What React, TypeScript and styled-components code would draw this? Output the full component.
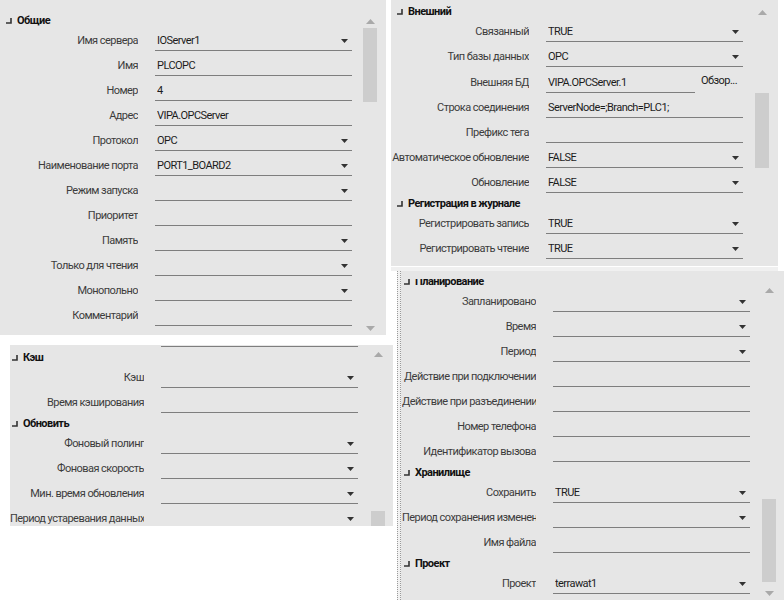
import React from 'react';
import styled, { createGlobalStyle } from 'styled-components';

const Global = createGlobalStyle`
  html, body { margin: 0; padding: 0; background: #ffffff; }
  body { font-family: Roboto, "Noto Sans", "Liberation Sans", sans-serif; font-size: 11px; letter-spacing: -0.55px; }
`;

const Page = styled.div`
  width: 784px;
  height: 600px;
  overflow: hidden;
  display: grid;
  grid-template-columns: 391px 393px;
  align-items: start;
`;

const Column = styled.div`
  display: flex;
  flex-direction: column;
`;

const Panel = styled.div<{ $w: number; $h: number; $ml?: number; $mt?: number }>`
  flex: none;
  width: ${(p) => p.$w}px;
  height: ${(p) => p.$h}px;
  margin-left: ${(p) => p.$ml ?? 0}px;
  margin-top: ${(p) => p.$mt ?? 0}px;
  background: #e6e6e6;
  display: flex;
  overflow: hidden;
`;

const Strip = styled.div`
  height: 4px;
  margin-top: 1px;
  width: 387px;
  background: #f0f0f0;
`;

const Splitter = styled.div`
  flex: none;
  width: 2px;
  margin-right: 1px;
  border-left: 1px dotted #9a9a9a;
  border-right: 1px dotted #9a9a9a;
  background: #f2f2f2;
`;

const Viewport = styled.div<{ $top?: number }>`
  flex: none;
  margin-top: ${(p) => p.$top ?? 0}px;
  overflow: hidden;
`;

const List = styled.div<{ $offset: number }>`
  margin-top: ${(p) => p.$offset}px;
  display: flex;
  flex-direction: column;
`;

const Header = styled.div<{ $indent: number }>`
  height: 16px;
  box-sizing: border-box;
  padding-top: 6px;
  padding-left: ${(p) => p.$indent}px;
  line-height: 10px;
  display: flex;
  align-items: baseline;
  gap: 5px;
  font-weight: 700;
  color: #111111;
  white-space: nowrap;
`;

const Row = styled.div<{ $lw: number; $h?: number }>`
  display: grid;
  grid-template-columns: ${(p) => p.$lw}px 197px;
  column-gap: 17px;
  height: ${(p) => p.$h ?? 25}px;
  align-items: end;
`;

const Label = styled.div`
  text-align: right;
  white-space: nowrap;
  overflow: hidden;
  color: #3c3c3c;
  line-height: 14px;
  padding-bottom: 3px;
`;

const FieldGroup = styled.div`
  display: flex;
  align-items: flex-end;
  min-width: 0;
`;

const Field = styled.div<{ $w?: number }>`
  box-sizing: border-box;
  ${(p) => (p.$w ? `flex: 0 0 ${p.$w}px;` : 'flex: 1;')}
  display: flex;
  align-items: center;
  border-bottom: 1px solid #7e7e7e;
  padding: 0 4px 2px 2px;
  line-height: 14px;
  min-height: 17px;
  color: #1c1c1c;
  white-space: nowrap;
`;

const Value = styled.span`
  flex: 1;
  overflow: hidden;
`;

const Browse = styled.span`
  margin-left: 6px;
  padding-bottom: 5px;
  line-height: 14px;
  color: #1c1c1c;
  white-space: nowrap;
`;

const ScrollBar = styled.div<{ $pt: number; $gap?: number }>`
  flex: none;
  width: 14px;
  margin-left: ${(p) => p.$gap ?? 11}px;
  padding-top: ${(p) => p.$pt}px;
  display: flex;
  flex-direction: column;
`;

const ArrowBox = styled.div`
  flex: none;
  height: 14px;
  display: flex;
  align-items: center;
  justify-content: center;
`;

const Track = styled.div`
  flex: 1;
  display: flex;
  flex-direction: column;
`;

const Thumb = styled.div<{ $top: number; $h: number }>`
  flex: none;
  margin-top: ${(p) => p.$top}px;
  height: ${(p) => p.$h}px;
  background: #cdcdcd;
`;

const Collapse = () => (
  <svg width="6" height="6" viewBox="0 0 6 6">
    <path d="M0 5 H5 V0" stroke="#333" strokeWidth="1.6" fill="none" />
  </svg>
);

const Caret = () => (
  <svg width="7" height="4" viewBox="0 0 7 4">
    <polygon points="0,0 7,0 3.5,4" fill="#333" />
  </svg>
);

const ScrollArrow = ({ up }: { up: boolean }) => (
  <svg width="9" height="5" viewBox="0 0 9 5">
    <polygon points={up ? '0,5 9,5 4.5,0' : '0,0 9,0 4.5,5'} fill="#a9a9a9" />
  </svg>
);

type RowItem = { kind: 'r'; label: string; value?: string; dd?: boolean; browse?: boolean; h?: number };
type Item = { kind: 'h'; text: string } | RowItem;

const H = (text: string): Item => ({ kind: 'h', text });
const R = (label: string, value = '', dd = false, extra: Partial<RowItem> = {}): Item => ({
  kind: 'r',
  label,
  value,
  dd,
  ...extra,
});

const Section = ({ items, lw }: { items: Item[]; lw: number }) => (
  <>
    {items.map((it, i) =>
      it.kind === 'h' ? (
        <Header key={i} $indent={lw - 132}>
          <Collapse />
          <span>{it.text}</span>
        </Header>
      ) : (
        <Row key={i} $lw={lw} $h={it.h}>
          <Label>{it.label}</Label>
          {it.browse ? (
            <FieldGroup>
              <Field $w={149}>
                <Value>{it.value}</Value>
              </Field>
              <Browse>Обзор...</Browse>
            </FieldGroup>
          ) : (
            <Field>
              <Value>{it.value}</Value>
              {it.dd && <Caret />}
            </Field>
          )}
        </Row>
      )
    )}
  </>
);

type SB = { pt: number; top: number; h: number; down?: boolean; gap?: number };

const Scroll = ({ pt, top, h, down, gap }: SB) => (
  <ScrollBar $pt={pt} $gap={gap}>
    <ArrowBox>
      <ScrollArrow up />
    </ArrowBox>
    <Track>
      <Thumb $top={top} $h={h} />
    </Track>
    {down && (
      <ArrowBox>
        <ScrollArrow up={false} />
      </ArrowBox>
    )}
  </ScrollBar>
);

const general: Item[] = [
  H('Общие'),
  R('Имя сервера', 'IOServer1', true),
  R('Имя', 'PLCOPC'),
  R('Номер', '4'),
  R('Адрес', 'VIPA.OPCServer'),
  R('Протокол', 'OPC', true),
  R('Наименование порта', 'PORT1_BOARD2', true),
  R('Режим запуска', '', true),
  R('Приоритет'),
  R('Память', '', true),
  R('Только для чтения', '', true),
  R('Монопольно', '', true),
  R('Комментарий'),
];

const external: Item[] = [
  H('Внешний'),
  R('Связанный', 'TRUE', true),
  R('Тип базы данных', 'OPC', true),
  R('Внешняя БД', 'VIPA.OPCServer.1', false, { browse: true, h: 26 }),
  R('Строка соединения', 'ServerNode=;Branch=PLC1;'),
  R('Префикс тега'),
  R('Автоматическое обновление', 'FALSE', true),
  R('Обновление', 'FALSE', true),
  H('Регистрация в журнале'),
  R('Регистрировать запись', 'TRUE', true),
  R('Регистрировать чтение', 'TRUE', true),
];

const cache: Item[] = [
  R(''),
  H('Кэш'),
  R('Кэш', '', true),
  R('Время кэширования'),
  H('Обновить'),
  R('Фоновый полинг', '', true),
  R('Фоновая скорость', '', true),
  R('Мин. время обновления', '', true),
  R('Период устаревания данных', '', true),
];

const planning: Item[] = [
  H('Планирование'),
  R('Запланировано', '', true),
  R('Время', '', true),
  R('Период', '', true),
  R('Действие при подключении'),
  R('Действие при разъединении'),
  R('Номер телефона'),
  R('Идентификатор вызова'),
  H('Хранилище'),
  R('Сохранить', 'TRUE', true),
  R('Период сохранения изменений', '', true),
  R('Имя файла'),
  H('Проект'),
  R('Проект', 'terrawat1', true),
];

export default function App() {
  return (
    <>
      <Global />
      <Page>
        <Column>
          <Panel $w={386} $h={335}>
            <Viewport>
              <List $offset={10}>
                <Section items={general} lw={138} />
              </List>
            </Viewport>
            <Scroll pt={14} top={0} h={74} down />
          </Panel>
          <Panel $w={383} $h={181} $ml={10} $mt={10}>
            <Viewport>
              <List $offset={-23}>
                <Section items={cache} lw={134} />
              </List>
            </Viewport>
            <Scroll pt={2} top={150} h={40} gap={13} />
          </Panel>
        </Column>
        <Column>
          <Panel $w={387} $h={266}>
            <Viewport>
              <List $offset={1}>
                <Section items={external} lw={138} />
              </List>
            </Viewport>
            <Scroll pt={5} top={74} h={75} gap={12} />
          </Panel>
          <Strip />
          <Panel $w={387} $h={329} $ml={6}>
            <Splitter />
            <Viewport $top={8}>
              <List $offset={-8}>
                <Section items={planning} lw={134} />
              </List>
            </Viewport>
            <Scroll pt={12} top={202} h={83} down gap={12} />
          </Panel>
        </Column>
      </Page>
    </>
  );
}
